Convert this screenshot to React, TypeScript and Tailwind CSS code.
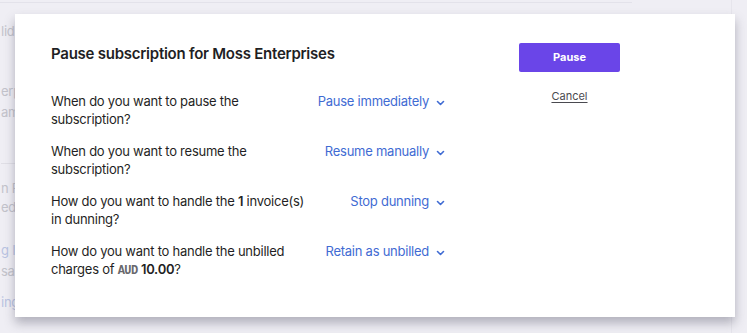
import React from "react";

function Chevron() {
  return (
    <svg width="9" height="6" viewBox="0 0 9 6" className="ml-[7px] mt-[3px]">
      <path d="M1.5 1.5 L4.5 4.5 L7.5 1.5" fill="none" stroke="#3f6bd3" strokeWidth="1.6" strokeLinecap="round" strokeLinejoin="round" />
    </svg>
  );
}

function Row({ q, a }: { q: React.ReactNode; a: string }) {
  return (
    <div className="flex items-start justify-between">
      <div className="w-[266px] text-[13px] leading-[18px] text-[#1f1f24]">{q}</div>
      <div className="flex items-center text-[13px] leading-[18px] text-[#3f6bd3]">
        <span>{a}</span>
        <Chevron />
      </div>
    </div>
  );
}

const faint = "text-[13px] leading-[18px] text-[#c3c3cb]";
const faintBlue = "text-[13px] leading-[18px] text-[#b9c3e2]";

export default function App() {
  return (
    <div className="relative h-[333px] w-[747px] overflow-hidden bg-[#efeef4] font-['Inter','Noto_Sans',sans-serif] tracking-[-0.25px]">
      {/* background page */}
      <div className="flex h-full">
        <div className="flex w-[732px] flex-col border-r border-[#e6e5ec]">
          <div className="mt-[2px] h-px w-[632px] bg-[#e3e2ea]" />
          <div className="flex flex-col pl-[1px] pt-[19px]">
            <div className={faint}>lid</div>
            <div className={`${faint} mt-[42px]`}>erp</div>
            <div className={`${faint} mt-[3px]`}>am</div>
            <div className="mt-[42px] h-px w-[15px] bg-[#e0dfe6]" />
            <div className={`${faint} mt-[15px]`}>n R</div>
            <div className={`${faint} mt-[1px]`}>ed U</div>
            <div className={`${faintBlue} mt-[25px]`}>g I</div>
            <div className={`${faint} mt-[3px]`}>sa</div>
            <div className={`${faintBlue} mt-[13px]`}>ing</div>
          </div>
        </div>
      </div>

      {/* modal */}
      <div className="absolute left-[15px] top-[14px] flex h-[303px] w-[720px] bg-white pl-[36px] pt-[31px] shadow-[0_6px_10px_rgba(60,60,80,0.35)]">
        <div className="w-[394px]">
          <div className="text-[15px] font-semibold leading-[18px] text-[#1f1f24]">
            Pause subscription for Moss Enterprises
          </div>
          <div className="mt-[29px] flex flex-col gap-[14px]">
            <Row q="When do you want to pause the subscription?" a="Pause immediately" />
            <Row q="When do you want to resume the subscription?" a="Resume manually" />
            <Row
              q={
                <>
                  How do you want to handle the <span className="font-semibold">1</span> invoice(s) in dunning?
                </>
              }
              a="Stop dunning"
            />
            <Row
              q={
                <>
                  How do you want to handle the unbilled charges of{" "}
                  <span className="font-['Liberation_Mono',monospace] text-[12px] font-bold tracking-[-0.6px] text-[#68686d]">
                    AUD
                  </span>{" "}
                  <span className="font-semibold">10.00</span>?
                </>
              }
              a="Retain as unbilled"
            />
          </div>
        </div>
        <div className="ml-[74px] mt-[-2px] flex w-[101px] flex-col items-center">
          <button className="h-[29px] w-[101px] rounded-[2px] bg-[#6a45e8] text-[11px] font-bold tracking-normal text-white">
            Pause
          </button>
          <button className="mt-[17px] text-[11px] leading-[14px] tracking-normal text-[#4a4a50] underline underline-offset-2">
            Cancel
          </button>
        </div>
      </div>
    </div>
  );
}
